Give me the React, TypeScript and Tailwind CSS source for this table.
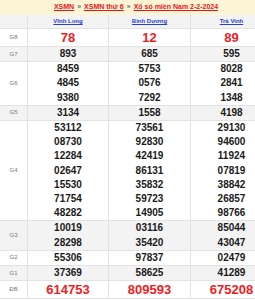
import React from "react";

type Row = { label: string; cols: string[][]; gray: boolean; big?: boolean };

const rows: Row[] = [
  { label: "G8", cols: [["78"], ["12"], ["89"]], gray: false, big: true },
  { label: "G7", cols: [["893"], ["685"], ["595"]], gray: true },
  { label: "G6", cols: [["8459", "4845", "9380"], ["5753", "0576", "7292"], ["8028", "2841", "1348"]], gray: false },
  { label: "G5", cols: [["3134"], ["1558"], ["4198"]], gray: true },
  {
    label: "G4",
    cols: [
      ["53112", "08730", "12284", "02647", "15530", "71754", "48282"],
      ["73561", "92830", "42419", "86131", "35832", "59723", "14905"],
      ["29130", "94600", "11924", "07819", "38842", "26857", "98766"],
    ],
    gray: false,
  },
  { label: "G3", cols: [["10019", "28298"], ["03116", "35420"], ["85044", "43047"]], gray: true },
  { label: "G2", cols: [["55306"], ["97837"], ["02479"]], gray: false },
  { label: "G1", cols: [["37369"], ["58625"], ["41289"]], gray: true },
  { label: "ĐB", cols: [["614753"], ["809593"], ["675208"]], gray: false, big: true },
];

const provinces = ["Vĩnh Long", "Bình Dương", "Trà Vinh"];

export default function App() {
  return (
    <div className="w-[255px] h-[300px] overflow-hidden bg-white" style={{ fontFamily: '"Liberation Sans", Arial, sans-serif' }}>
      <div className="w-[272px]">
        <div className="h-[15px] bg-[#fcf4d4] flex items-center justify-center text-[7px] font-bold text-[#e8141c] gap-[3px]">
          <span className="underline">XSMN</span>
          <span className="text-[#777]">»</span>
          <span className="underline">XSMN thứ 6</span>
          <span className="text-[#777]">»</span>
          <span className="underline">Xổ số miền Nam 2-2-2024</span>
        </div>
        <div className="grid grid-cols-[28px_81px_82px_81px] bg-[#f3f3f3] border-b border-[#e2e2e2] h-[14px]">
          <div className="border-r border-[#e2e2e2]" />
          {provinces.map((p, i) => (
            <div
              key={p}
              className={
                i < 2
                  ? "border-r border-[#e2e2e2] flex items-center justify-center text-[6px] font-bold text-[#2a3fd0] underline"
                  : "flex items-center justify-center text-[6px] font-bold text-[#2a3fd0] underline"
              }
            >
              {p}
            </div>
          ))}
        </div>
        {rows.map((r) => (
          <div
            key={r.label}
            className={
              r.gray
                ? "grid grid-cols-[28px_81px_82px_81px] bg-[#f3f3f3] border-b border-[#e2e2e2]"
                : "grid grid-cols-[28px_81px_82px_81px] bg-white border-b border-[#e2e2e2]"
            }
          >
            <div className="border-r border-[#e2e2e2] flex items-center justify-center text-[6px] text-[#777]">
              {r.label}
            </div>
            {r.cols.map((c, i) => (
              <div
                key={i}
                className={
                  i < 2
                    ? "border-r border-[#e2e2e2] flex flex-col items-center justify-center"
                    : "flex flex-col items-center justify-center"
                }
              >
                {c.map((n) =>
                  r.big ? (
                    <div key={n} className="text-[13px] leading-[17px] font-bold text-[#f01c24]">
                      {n}
                    </div>
                  ) : (
                    <div key={n} className="text-[10px] leading-[14.2px] font-bold text-[#1a1a1a]">
                      {n}
                    </div>
                  )
                )}
              </div>
            ))}
          </div>
        ))}
      </div>
    </div>
  );
}
